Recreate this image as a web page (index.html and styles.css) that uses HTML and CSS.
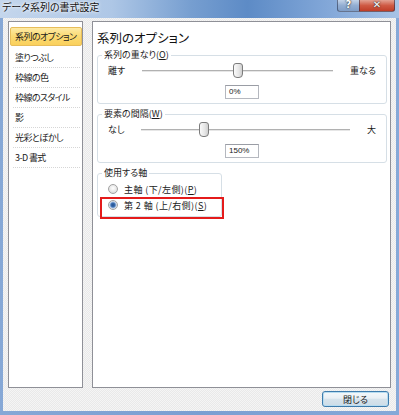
FILE: index.html
```html
<!DOCTYPE html>
<html lang="ja">
<head>
    <meta charset="utf-8">
    <title>データ系列の書式設定</title>
    <link rel="stylesheet" href="styles.css">
</head>
<body>
<div class="window">
    <div class="titlebar">
        <span class="title">データ系列の書式設定</span>
        <div class="caption-buttons">
            <span class="cap-btn help">?</span>
            <span class="cap-btn close">✕</span>
        </div>
    </div>

    <div class="client">
        <div class="main">
            <ul class="nav">
                <li class="selected">系列のオプション</li>
                <li>塗りつぶし</li>
                <li>枠線の色</li>
                <li>枠線のスタイル</li>
                <li>影</li>
                <li>光彩とぼかし</li>
                <li>3-D 書式</li>
            </ul>

            <div class="panel">
                <h2 class="panel-title">系列のオプション</h2>

                <fieldset class="group">
                    <legend>系列の重なり(<u>O</u>)</legend>
                    <div class="slider-row">
                        <span>離す</span>
                        <div class="slider"><span class="thumb" style="left: 50%;"></span></div>
                        <span>重なる</span>
                    </div>
                    <div class="value-row"><span class="textbox">0%</span></div>
                </fieldset>

                <fieldset class="group">
                    <legend>要素の間隔(<u>W</u>)</legend>
                    <div class="slider-row">
                        <span>なし</span>
                        <div class="slider"><span class="thumb" style="left: 30%;"></span></div>
                        <span>大</span>
                    </div>
                    <div class="value-row"><span class="textbox">150%</span></div>
                </fieldset>

                <fieldset class="group axis-group">
                    <legend>使用する軸</legend>
                    <div class="radio-row">
                        <span class="radio"></span>
                        <span>主軸 (下/左側)(<u>P</u>)</span>
                    </div>
                    <div class="radio-row">
                        <span class="radio checked"></span>
                        <span>第 2 軸 (上/右側)(<u>S</u>)</span>
                    </div>
                    <div class="highlight-box"></div>
                </fieldset>
            </div>
        </div>

        <div class="footer">
            <button class="close-button">閉じる</button>
        </div>
    </div>
</div>
</body>
</html>
```

FILE: styles.css
```css
html, body {
    margin: 0;
    padding: 0;
}

body {
    width: 399px;
    height: 415px;
    overflow: hidden;
    font-family: "Noto Sans CJK JP", "Noto Sans", sans-serif;
    font-size: 9px;
    font-feature-settings: "palt" 1;
    color: #1a1a1a;
}

.window {
    width: 399px;
    height: 415px;
    display: flex;
    flex-direction: column;
    background: linear-gradient(90deg, #86a8d6, #7b9fd2 50%, #86a9d8);
}

/* title bar */
.titlebar {
    height: 18px;
    flex-shrink: 0;
    display: flex;
    justify-content: space-between;
    align-items: flex-start;
    background: linear-gradient(90deg, #c4d6ec 0%, #aec7e6 28%, #769ed0 48%, #5d8bc6 62%, #82a7d8 82%, #a7c3e6 100%);
}

.title {
    padding-left: 2px;
    line-height: 14px;
    font-size: 10px;
    color: #111;
    text-shadow: 0 0 4px #fff, 0 0 2px #fff;
}

.caption-buttons {
    display: flex;
    margin-right: 4px;
}

.cap-btn {
    height: 12px;
    box-sizing: border-box;
    border: 1px solid rgba(30, 40, 70, 0.55);
    border-top: none;
    color: #fff;
    font-family: "DejaVu Sans", sans-serif;
    font-weight: bold;
    text-align: center;
    line-height: 10px;
    text-shadow: 0 0 2px #333, 0 0 1px #333;
}

.cap-btn.help {
    width: 22px;
    font-size: 10px;
    border-radius: 0 0 0 3px;
    border-right: none;
    background: linear-gradient(#c3d3e8, #93aed2 50%, #7f9dc6);
}

.cap-btn.close {
    width: 36px;
    font-size: 10px;
    border-radius: 0 0 3px 0;
    background: linear-gradient(#e3a293, #cf5a44 50%, #bf3d27);
}

/* client area */
.client {
    flex: 1;
    margin: 0 3px 4px 3px;
    padding: 3px 5px 4px 5px;
    display: flex;
    flex-direction: column;
    background-color: #efefef;
    background-image: repeating-conic-gradient(#f5f5f5 0 25%, #e9e9e9 0 50%);
    background-size: 2px 2px;
    min-height: 0;
}

.main {
    flex: 1;
    display: flex;
    gap: 9px;
    min-height: 0;
}

.nav {
    width: 75px;
    box-sizing: border-box;
    margin: 0;
    padding: 5px 0 0 1px;
    list-style: none;
    background: #fff;
    border: 1px solid #8f9097;
    letter-spacing: -0.6px;
}

.nav li {
    height: 20px;
    box-sizing: border-box;
    margin: 0 2px 0 3px;
    padding-left: 2px;
    line-height: 19px;
    border-bottom: 1px dotted #d6d6d6;
    white-space: nowrap;
}

.nav li.selected {
    height: 19px;
    margin: 0 0 2px 0;
    padding-left: 4px;
    line-height: 17px;
    border: 1px solid #e7bd5a;
    border-radius: 2px;
    background: linear-gradient(#fdeaa6, #fbdb75 45%, #fad05c);
}

.panel {
    flex: 1;
    box-sizing: border-box;
    padding: 0 3px 0 4px;
    background: #fff;
    border: 1px solid #8f9097;
}

.panel-title {
    margin: 7px 0 2px 0;
    font-size: 12.5px;
    font-weight: normal;
    line-height: 18px;
    color: #111;
}

/* group boxes */
.group {
    margin: 0 0 4px 0;
    padding: 0 10px 4px 10px;
    border: 1px solid #d6dfe6;
    border-radius: 3px;
    min-width: 0;
}

.group legend {
    margin-left: -6px;
    padding: 0 2px;
    line-height: 12px;
}

.slider-row {
    margin-top: 1px;
    height: 16px;
    display: flex;
    align-items: center;
    gap: 17px;
}

.slider {
    flex: 1;
    height: 16px;
    position: relative;
}

.slider::before {
    content: "";
    position: absolute;
    left: 0;
    right: 0;
    top: 8px;
    height: 1px;
    background: #b1b1b1;
    border-bottom: 1px solid #e6e6e6;
}

.thumb {
    position: absolute;
    top: 1px;
    width: 10px;
    height: 15px;
    margin-left: -5px;
    box-sizing: border-box;
    border: 1px solid #7c7c7c;
    border-radius: 3px 3px 4px 4px;
    background: linear-gradient(90deg, #fafafa, #e6e6e6 60%, #cfcfcf);
}

.value-row {
    margin-top: 7px;
    display: flex;
    justify-content: center;
}

.textbox {
    width: 34px;
    height: 14px;
    box-sizing: border-box;
    padding-left: 3px;
    border: 1px solid #b5b8bf;
    border-top-color: #9a9da5;
    background: #fff;
    font-family: "Liberation Sans", sans-serif;
    font-size: 8px;
    line-height: 12px;
}

.axis-group {
    position: relative;
    width: 125px;
    box-sizing: border-box;
    margin-top: 2px;
    padding: 2px 0 3px 10px;
}

.radio-row {
    height: 16px;
    display: flex;
    align-items: center;
    gap: 6px;
    white-space: nowrap;
    letter-spacing: 0.4px;
}

.radio {
    width: 10px;
    height: 10px;
    box-sizing: border-box;
    border-radius: 50%;
    border: 1px solid #a2a2a2;
    background: radial-gradient(circle at 50% 40%, #ffffff, #e4e4e4 60%, #cdcdcd);
}

.radio.checked {
    background: radial-gradient(circle, #23508e 0, #3a6db0 2px, #9fbbe0 3px, #eeeeee 4px, #d0d0d0 5px);
}

.highlight-box {
    position: absolute;
    left: 2px;
    top: 18px;
    width: 124px;
    height: 22px;
    box-sizing: border-box;
    border: 2px solid #e41b1b;
}

/* footer */
.footer {
    display: flex;
    justify-content: flex-end;
    padding: 3px 2px 0 0;
}

.close-button {
    width: 67px;
    height: 16px;
    padding: 0;
    box-sizing: border-box;
    border: 1px solid #3d7bad;
    border-radius: 3px;
    background: linear-gradient(#f4f8fb, #e9eff4 45%, #d6e3ec 50%, #cddce7);
    box-shadow: inset 0 0 0 1px #b7dcf0;
    font-family: "Noto Sans CJK JP", sans-serif;
    font-size: 9px;
    font-feature-settings: "palt" 1;
    color: #1a1a1a;
    line-height: 13px;
}
```
